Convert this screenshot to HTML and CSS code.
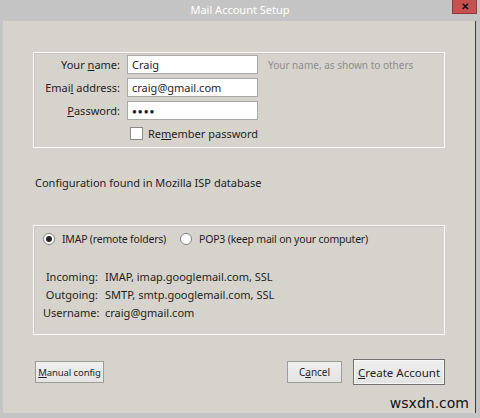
FILE: index.html
```html
<!DOCTYPE html>
<html lang="en">

<head>
    <meta charset="UTF-8">
    <meta name="viewport" content="width=device-width, initial-scale=1.0">
    <title>Mail Account Setup</title>
    <link rel="stylesheet" href="styles.css">
</head>

<body>
    <div class="window">
        <div class="titlebar">
            Mail Account Setup
            <div class="close">&#x2715;</div>
        </div>
        <div class="client">
            <div class="group identity">
                <label class="lbl">Your <u>n</u>ame:</label>
                <div class="field">Craig</div>
                <div class="hint">Your name, as shown to others</div>

                <label class="lbl">Emai<u>l</u> address:</label>
                <div class="field">craig@gmail.com</div>
                <div></div>

                <label class="lbl"><u>P</u>assword:</label>
                <div class="field dots">&#9679;&#9679;&#9679;&#9679;</div>
                <div></div>

                <div></div>
                <div class="remember"><span class="check"></span><span>Re<u>m</u>ember password</span></div>
                <div></div>
            </div>

            <div class="status">Configuration found in Mozilla ISP database</div>

            <div class="group servers">
                <div class="radios">
                    <div class="radio"><span class="dot on"></span><span>IMAP (remote folders)</span></div>
                    <div class="radio"><span class="dot"></span><span>POP3 (keep mail on your computer)</span></div>
                </div>
                <div class="details">
                    <div class="key">Incoming:</div>
                    <div>IMAP, imap.googlemail.com, SSL</div>
                    <div class="key">Outgoing:</div>
                    <div>SMTP, smtp.googlemail.com, SSL</div>
                    <div class="key">Username:</div>
                    <div>craig@gmail.com</div>
                </div>
            </div>

            <div class="actions">
                <button class="btn manual"><u>M</u>anual config</button>
                <div class="spacer"></div>
                <button class="btn cancel">C<u>a</u>ncel</button>
                <button class="btn create"><u>C</u>reate Account</button>
            </div>
            <div class="mark">wsxdn.com</div>
        </div>
    </div>
</body>

</html>
```

FILE: styles.css
```css
* {
    box-sizing: border-box;
}

body {
    margin: 0;
    background-color: #c4c4c4;
    font-family: "Noto Sans", sans-serif;
    font-size: 11px;
    color: #1e1e1e;
}

.window {
    width: 480px;
    height: 418px;
    display: flex;
    flex-direction: column;
}

.titlebar {
    position: relative;
    height: 21px;
    line-height: 20px;
    text-align: center;
    color: #fff;
    font-size: 11px;
}

.close {
    position: absolute;
    top: 0;
    left: 452px;
    width: 25px;
    height: 14px;
    background-color: #c75050;
    border: 1px solid #8e3a3a;
    border-top: none;
    color: #111;
    font-size: 10px;
    font-weight: bold;
    line-height: 13px;
}

.client {
    position: relative;
    flex: 1;
    margin: 0 4px 5px 3px;
    background-color: #d6d3cc;
    border-right: 1px solid #3c3c3c;
    padding: 31px 0 0 30px;
}

.group {
    width: 412px;
    border: 1px solid #fbfaf8;
    box-shadow: inset 1px 1px 0 #c9c5bd;
}

/* name / address / password block */
.identity {
    height: 96px;
    display: grid;
    grid-template-columns: 86px 131px auto;
    grid-template-rows: 19px 19px 19px 19px;
    column-gap: 7px;
    row-gap: 4px;
    padding-top: 2px;
    align-items: center;
}

.lbl {
    text-align: right;
    white-space: nowrap;
}

.field {
    height: 19px;
    background-color: #fff;
    border: 1px solid #a9a9a9;
    padding-left: 4px;
    line-height: 17px;
}

.dots {
    font-size: 8px;
    letter-spacing: 1px;
}

.hint {
    color: #8d8d8d;
    padding-left: 3px;
    font-size: 10px;
    white-space: nowrap;
}

.remember {
    display: flex;
    align-items: center;
    padding-left: 3px;
    white-space: nowrap;
}

.check {
    flex: none;
    width: 13px;
    height: 13px;
    background-color: #fff;
    border: 1px solid #8a8a8a;
    margin-right: 5px;
}

.status {
    margin-top: 27px;
    padding-left: 2px;
    height: 50px;
}

/* server settings block */
.servers {
    height: 110px;
    padding: 6px 0 0 9px;
}

.radios {
    display: flex;
    gap: 14px;
    font-size: 10.5px;
    letter-spacing: -0.2px;
}

.radio {
    display: flex;
    align-items: center;
    white-space: nowrap;
}

.dot {
    flex: none;
    width: 12px;
    height: 12px;
    border-radius: 50%;
    background-color: #fff;
    border: 1px solid #7f7f7f;
    margin-right: 7px;
    display: flex;
    align-items: center;
    justify-content: center;
}

.dot.on::after {
    content: "";
    width: 6px;
    height: 6px;
    border-radius: 50%;
    background-color: #222;
}

.details {
    display: grid;
    grid-template-columns: 55px auto;
    column-gap: 7px;
    row-gap: 3px;
    margin-top: 23px;
    line-height: 15px;
}

.key {
    text-align: right;
}

.actions {
    display: flex;
    align-items: center;
    width: 412px;
    margin-top: 24px;
    gap: 11px;
}

.spacer {
    flex: 1;
}

.btn {
    font-family: inherit;
    font-size: 11px;
    color: #1e1e1e;
    background: linear-gradient(#efefef, #e3e3e3);
    border: 1px solid #9c9c9c;
    height: 22px;
    padding: 0;
    white-space: nowrap;
}

.manual {
    width: 69px;
    margin-left: 2px;
    font-size: 9.5px;
    letter-spacing: -0.1px;
}

.cancel {
    width: 55px;
    font-size: 10px;
}

.create {
    width: 92px;
    height: 26px;
    font-size: 11.5px;
    border: 1px solid #707070;
    box-shadow: inset 0 0 0 1px #f6f6f6;
}

.mark {
    position: absolute;
    right: 6px;
    bottom: 2px;
    font-family: "DejaVu Sans", sans-serif;
    font-size: 14px;
    color: #111;
}
```
